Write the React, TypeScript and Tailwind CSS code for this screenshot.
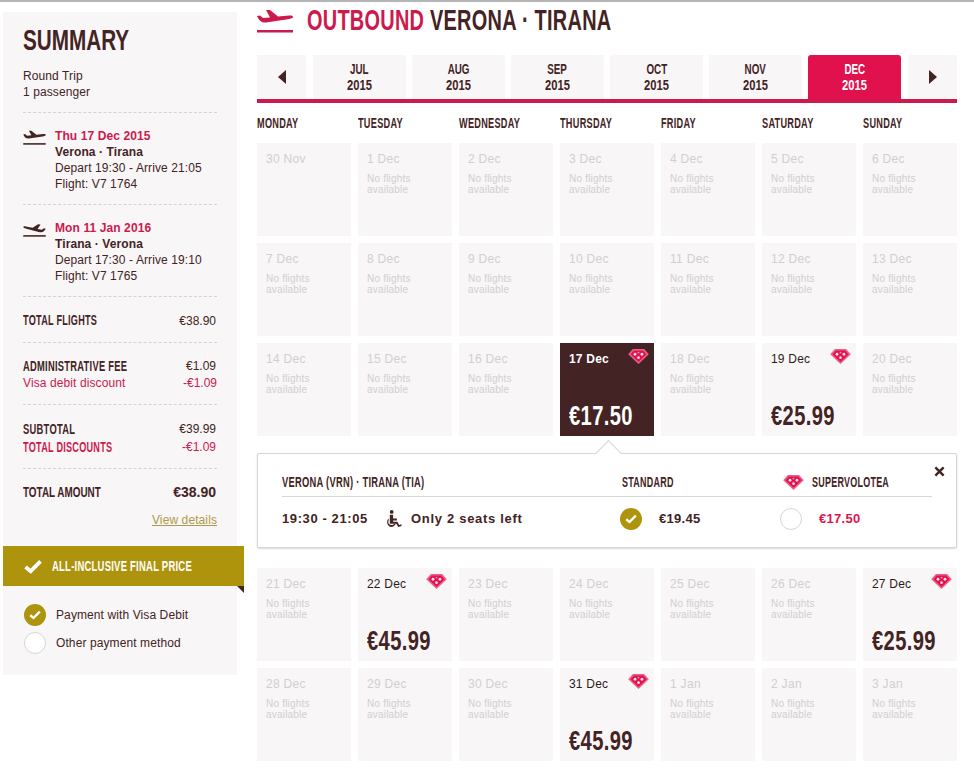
import React from "react";

const DARK = "text-[#432323]";

function Gem({ className = "" }: { className?: string }) {
  return (
    <svg viewBox="0 0 22 16" className={className}>
      <polygon points="5,0 17,0 22,5.5 11,16 0,5.5" fill="#ee5f8a" />
      <polygon points="6,1.6 16,1.6 19.6,5.5 11,13.8 2.4,5.5" fill="#e0134f" />
      <circle cx="7.3" cy="5.6" r="1.5" fill="#ffe3eb" />
      <circle cx="14.7" cy="5.6" r="1.5" fill="#ffe3eb" />
      <circle cx="11" cy="9.2" r="1.4" fill="#ffe3eb" />
      <circle cx="11" cy="3.8" r="1" fill="#f58fae" />
    </svg>
  );
}

function Plane({ color, className = "", land = false }: { color: string; className?: string; land?: boolean }) {
  return (
    <svg viewBox="0 0 36 24" className={className} fill={color}>
      <g transform={land ? "translate(36,2) scale(-1,1) rotate(-6 18 8)" : undefined}>
        <path d="M0 7 L3 6.5 L6 9 L13 8.5 L9 1 L13 1 L21 7.5 L32 6.5 C35 6.3 36 7 36 8 C36 9 34 9.8 31 10.2 L9 13.5 C5 13.8 2 12 0 7 Z" />
      </g>
      <rect x="0" y="21" width="36" height="2.5" />
    </svg>
  );
}

function Check({ className = "" }: { className?: string }) {
  return (
    <svg viewBox="0 0 20 16" className={className} fill="none" stroke="#fff" strokeWidth="4">
      <path d="M2 8.5 L7.5 13 L18 2.5" />
    </svg>
  );
}

function Radio({ on }: { on?: boolean }) {
  return on ? (
    <span className="flex h-[22px] w-[22px] shrink-0 items-center justify-center rounded-full bg-[#ae930c]">
      <Check className="h-[10px] w-[12px]" />
    </span>
  ) : (
    <span className="block h-[22px] w-[22px] shrink-0 rounded-full border border-[#d8d6d6] bg-white" />
  );
}

function Cond({ className = "", children }: { className?: string; children: React.ReactNode }) {
  return <span className={`inline-block font-['Liberation_Sans',sans-serif] font-bold whitespace-nowrap ${className}`}>{children}</span>;
}

function Dash() {
  return <div className="h-px border-t border-dashed border-[#d5d2d2]" />;
}

function FlightInfo({ date, route, times, flight, land }: { date: string; route: string; times: string; flight: string; land?: boolean }) {
  return (
    <div className="flex h-[91px] pt-[15px]">
      <Plane color="#432323" land={land} className="mt-[2px] h-[15px] w-[23px] shrink-0" />
      <div className="ml-[9px] text-[12px] leading-[16px] tracking-[0.1px]">
        <div className="font-bold text-[#cc1a4d]">{date}</div>
        <div className={`font-bold ${DARK}`}>{route}</div>
        <div className={DARK}>{times}</div>
        <div className={DARK}>{flight}</div>
      </div>
    </div>
  );
}

function Summary() {
  return (
    <aside className="relative mt-[10px] ml-[3px] h-[663px] w-[234px] shrink-0 bg-[#f8f6f7] font-['Liberation_Sans',sans-serif]">
      <div className="px-[20px]">
        <div className="h-[55px] pt-[11px]">
          <Cond className={`block origin-left scale-x-[0.69] text-[30px] leading-[34px] ${DARK}`}>SUMMARY</Cond>
        </div>
        <div className={`h-[45px] pt-[1px] text-[12px] leading-[16px] tracking-[0.1px] ${DARK}`}>
          <div>Round Trip</div>
          <div>1 passenger</div>
        </div>
        <Dash />
        <FlightInfo date="Thu 17 Dec 2015" route="Verona · Tirana" times="Depart 19:30 - Arrive 21:05" flight="Flight: V7 1764" />
        <Dash />
        <FlightInfo land date="Mon 11 Jan 2016" route="Tirana · Verona" times="Depart 17:30 - Arrive 19:10" flight="Flight: V7 1765" />
        <Dash />
        <div className={`flex h-[45px] items-center justify-between pt-[2px] text-[12px] ${DARK}`}>
          <Cond className="origin-left scale-x-[0.65] text-[14px] tracking-[0.4px]">TOTAL FLIGHTS</Cond>
          <span className="mr-[1px]">€38.90</span>
        </div>
        <Dash />
        <div className="h-[61px] pt-[15px] text-[12px] leading-[17px]">
          <div className={`flex justify-between ${DARK}`}>
            <Cond className="origin-left scale-x-[0.667] text-[14px] tracking-[0.4px]">ADMINISTRATIVE FEE</Cond>
            <span className="mr-[1px]">€1.09</span>
          </div>
          <div className="flex justify-between text-[#cc1a4d]">
            <span className="tracking-[0.1px]">Visa debit discount</span>
            <span>-€1.09</span>
          </div>
        </div>
        <Dash />
        <div className="h-[63px] pt-[15px] text-[12px] leading-[18px]">
          <div className={`flex justify-between ${DARK}`}>
            <Cond className="origin-left scale-x-[0.67] text-[14px] tracking-[0.4px]">SUBTOTAL</Cond>
            <span className="mr-[1px]">€39.99</span>
          </div>
          <div className="flex justify-between text-[#cc1a4d]">
            <Cond className="origin-left scale-x-[0.65] text-[14px] tracking-[0.4px]">TOTAL DISCOUNTS</Cond>
            <span className="mr-[1px]">-€1.09</span>
          </div>
        </div>
        <Dash />
        <div className={`flex h-[47px] items-center justify-between ${DARK}`}>
          <Cond className="origin-left scale-x-[0.66] text-[15px]">TOTAL AMOUNT</Cond>
          <span className="mr-[1px] text-[14px] font-bold">€38.90</span>
        </div>
        <div className="-mt-[3px] flex h-[18px] justify-end text-[12px] leading-[14px] tracking-[0.1px] text-[#ae9a4a] underline">View details</div>
      </div>
      <div className="relative mt-[15px] flex h-[40px] w-[241px] items-center bg-[#ae930c] pl-[20px] text-white">
        <Check className="h-[15px] w-[20px] shrink-0" />
        <Cond className="ml-[9px] origin-left scale-x-[0.63] text-[15px] tracking-[0.4px]">ALL-INCLUSIVE FINAL PRICE</Cond>
        <span className="absolute top-full right-0 h-0 w-0 border-t-[7px] border-l-[7px] border-t-[#432323] border-l-transparent" />
      </div>
      <div className={`flex flex-col gap-[6px] pt-[18px] pl-[21px] text-[12px] tracking-[0.1px] ${DARK}`}>
        <div className="flex items-center gap-[10px]">
          <Radio on />
          <span>Payment with Visa Debit</span>
        </div>
        <div className="flex items-center gap-[10px]">
          <Radio />
          <span>Other payment method</span>
        </div>
      </div>
    </aside>
  );
}

function MonthTab({ m, active, className = "" }: { m: string; active?: boolean; className?: string }) {
  return (
    <div
      className={`flex h-[44px] w-[93px] flex-col items-center justify-center text-[14px] leading-[16px] ${
        active ? "rounded-t-[3px] bg-[#e0114d] text-white" : `bg-[#f8f6f7] ${DARK}`
      } ${className}`}
    >
      <Cond className="origin-center scale-x-[0.7]">{m}</Cond>
      <Cond className="origin-center scale-x-[0.8]">2015</Cond>
    </div>
  );
}

type CellData = { d: string; price?: string; sel?: boolean; noText?: boolean };

function Cell({ d, price, sel, noText }: CellData) {
  if (price) {
    return (
      <div className={`relative h-[93px] ${sel ? "bg-[#432323] text-white" : `bg-[#f8f6f7] ${DARK}`}`}>
        <div className={`pt-[9px] pl-[9px] text-[12px] leading-[14px] tracking-[0.2px] ${sel ? "font-bold" : "text-[#2f1a1a]"}`}>{d}</div>
        <Gem className="absolute top-[6px] right-[5px] h-[15px] w-[21px]" />
        <Cond className="absolute bottom-[5px] left-[9px] origin-left scale-x-[0.72] text-[28px] leading-[30px] tracking-[0.5px]">{price}</Cond>
      </div>
    );
  }
  return (
    <div className="h-[93px] bg-[#f8f6f7] pt-[9px] pl-[9px] text-[#d2cfcf]">
      <div className="text-[12px] leading-[14px] tracking-[0.3px]">{d}</div>
      {!noText && (
        <div className="mt-[7px] text-[10px] leading-[11px] tracking-[0.2px]">
          No flights
          <br />
          available
        </div>
      )}
    </div>
  );
}

const rowsTop: CellData[] = [
  { d: "30 Nov", noText: true }, { d: "1 Dec" }, { d: "2 Dec" }, { d: "3 Dec" }, { d: "4 Dec" }, { d: "5 Dec" }, { d: "6 Dec" },
  { d: "7 Dec" }, { d: "8 Dec" }, { d: "9 Dec" }, { d: "10 Dec" }, { d: "11 Dec" }, { d: "12 Dec" }, { d: "13 Dec" },
  { d: "14 Dec" }, { d: "15 Dec" }, { d: "16 Dec" }, { d: "17 Dec", price: "€17.50", sel: true }, { d: "18 Dec" }, { d: "19 Dec", price: "€25.99" }, { d: "20 Dec" },
];
const rowsBottom: CellData[] = [
  { d: "21 Dec" }, { d: "22 Dec", price: "€45.99" }, { d: "23 Dec" }, { d: "24 Dec" }, { d: "25 Dec" }, { d: "26 Dec" }, { d: "27 Dec", price: "€25.99" },
  { d: "28 Dec" }, { d: "29 Dec" }, { d: "30 Dec" }, { d: "31 Dec", price: "€45.99" }, { d: "1 Jan" }, { d: "2 Jan" }, { d: "3 Jan" },
];
const days = ["MONDAY", "TUESDAY", "WEDNESDAY", "THURSDAY", "FRIDAY", "SATURDAY", "SUNDAY"];

function Popup() {
  return (
    <div className="relative mt-[17px] mb-[20px] h-[95px] rounded-[2px] border border-[#d6d6d6] bg-white px-[24px] pt-[20px] shadow-[0_1px_2px_rgba(0,0,0,0.15)]">
      <span className="absolute top-[-10px] left-[341px] h-[19px] w-[19px] rotate-45 border-t border-l border-[#d6d6d6] bg-white" />
      <svg viewBox="0 0 12 12" className="absolute top-[12px] right-[11px] h-[11px] w-[11px]" stroke="#432323" strokeWidth="2.6">
        <path d="M1.5 1.5 L10.5 10.5 M10.5 1.5 L1.5 10.5" />
      </svg>
      <div className={`relative flex h-[23px] items-center border-b border-[#d6d6d6] pb-[5px] text-[14px] tracking-[0.4px] ${DARK}`}>
        <span className="w-[340px]">
          <Cond className="origin-left scale-x-[0.667]">VERONA (VRN) · TIRANA (TIA)</Cond>
        </span>
        <span className="w-[161px]">
          <Cond className="origin-left scale-x-[0.64]">STANDARD</Cond>
        </span>
        <Gem className="h-[15px] w-[21px]" />
        <Cond className="ml-[8px] origin-left scale-x-[0.64]">SUPERVOLOTEA</Cond>
      </div>
      <div className={`flex h-[43px] items-center text-[13px] font-bold ${DARK}`}>
        <span className="w-[105px] tracking-[0.6px]">19:30 - 21:05</span>
        <svg viewBox="0 0 16 18" className="h-[17px] w-[15px]" fill="#432323">
          <circle cx="5" cy="2" r="2" />
          <path d="M3 5 H6.5 V9 H10.5 V11 H6.5 V12.5 H11 L13 16 L15.5 15 V17 L12 18 L10 14.5 H3 Z" />
          <path d="M1.8 9 V11 C0.5 13.5 2 16 4.5 16 C6 16 7.3 15.3 8 14.6 H9.5 C8.5 16.6 6.5 18 4.5 18 C0.5 18 -1.5 12 1.8 9 Z" />
        </svg>
        <span className="ml-[9px] w-[209px] tracking-[0.7px]">Only 2 seats left</span>
        <Radio on />
        <span className="ml-[17px] w-[121px] tracking-[0.3px]">€19.45</span>
        <Radio />
        <span className="ml-[17px] tracking-[0.3px] text-[#e0134f]">€17.50</span>
      </div>
    </div>
  );
}

export default function App() {
  return (
    <div className="h-[773px] w-[974px] overflow-hidden border-t-[2px] border-[#b5b5b5] bg-white font-['Liberation_Sans',sans-serif]">
      <div className="flex">
        <Summary />
        <main className="ml-[20px] w-[700px]">
          <div className="flex h-[53px] items-start">
            <Plane color="#cc1a4d" className="mt-[7px] h-[24px] w-[36px] shrink-0" />
            <Cond className="ml-[14px] origin-left scale-x-[0.664] text-[30px] leading-[36px] tracking-[0.4px]">
              <span className="text-[#cc1a4d]">OUTBOUND </span>
              <span className={DARK}>VERONA · TIRANA</span>
            </Cond>
          </div>
          <div className="flex h-[44px] gap-[6px]">
            <div className="mr-[1px] flex h-[44px] w-[49px] items-center justify-center bg-[#f8f6f7]">
              <span className="h-0 w-0 border-y-[7px] border-r-[8px] border-y-transparent border-r-[#432323]" />
            </div>
            <MonthTab m="JUL" />
            <MonthTab m="AUG" />
            <MonthTab m="SEP" />
            <MonthTab m="OCT" />
            <MonthTab m="NOV" />
            <MonthTab m="DEC" active className="mr-[1px]" />
            <div className="flex h-[44px] w-[49px] items-center justify-center bg-[#f8f6f7]">
              <span className="h-0 w-0 border-y-[7px] border-l-[8px] border-y-transparent border-l-[#432323]" />
            </div>
          </div>
          <div className="h-[4px] bg-[#cc1a4d]" />
          <div className={`grid h-[40px] grid-cols-7 items-center gap-x-[7px] pt-[1px] text-[14px] tracking-[0.4px] ${DARK}`}>
            {days.map((d) => (
              <Cond key={d} className="origin-left scale-x-[0.655]">{d}</Cond>
            ))}
          </div>
          <div className="grid grid-cols-7 gap-[7px]">
            {rowsTop.map((c) => (
              <Cell key={c.d} {...c} />
            ))}
          </div>
          <Popup />
          <div className="grid grid-cols-7 gap-[7px]">
            {rowsBottom.map((c) => (
              <Cell key={c.d} {...c} />
            ))}
          </div>
        </main>
      </div>
    </div>
  );
}
